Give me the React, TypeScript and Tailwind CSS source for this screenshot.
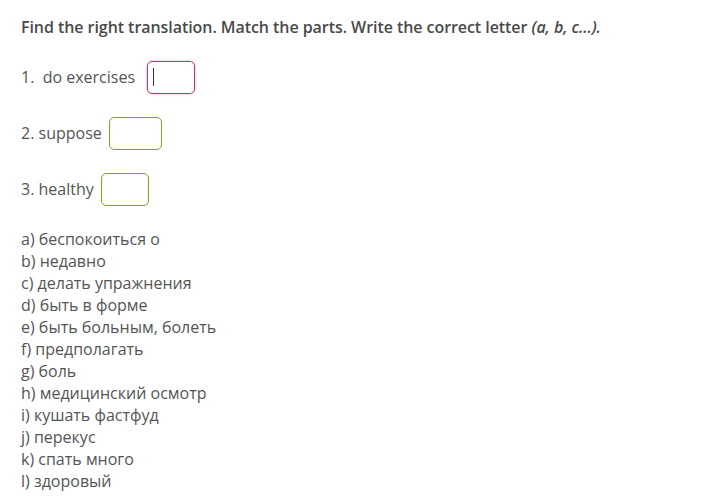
import React from "react";

const items = [
  "a) беспокоиться о",
  "b) недавно",
  "c) делать упражнения",
  "d) быть в форме",
  "e) быть больным, болеть",
  "f) предполагать",
  "g) боль",
  "h) медицинский осмотр",
  "i) кушать фастфуд",
  "j) перекус",
  "k) спать много",
  "l) здоровый",
];

export default function App() {
  return (
    <div
      className="w-[719px] h-[504px] bg-white text-[#555555] pl-[21px] pt-[15px]"
      style={{ fontFamily: '"Open Sans", sans-serif' }}
    >
      <div className="text-[16px] leading-[24px] font-semibold text-[#4a4a4a] tracking-[-0.06px]">
        Find the right translation. Match the parts. Write the correct letter{" "}
        <em className="italic">(a, b, c...).</em>
      </div>
      <div className="mt-[21px] flex items-center h-[34px] text-[16px]">
        <span>1.&nbsp;&nbsp;do exercises</span>
        <div className="ml-[12px] w-[48px] h-[33px] border border-[#c2306f] rounded-[5px] shadow-[0_0_3px_rgba(194,48,111,0.35)] flex items-center pl-[5px]">
          <div className="w-[1px] h-[18px] bg-[#333]" />
        </div>
      </div>
      <div className="mt-[22px] flex items-center h-[34px] text-[16px]">
        <span>2. suppose</span>
        <div className="ml-[7px] w-[53px] h-[33px] border border-[#8aa139] rounded-[5px] shadow-[inset_0_0_2px_rgba(138,161,57,0.3)]" />
      </div>
      <div className="mt-[22px] flex items-center h-[34px] text-[16px]">
        <span>3. healthy</span>
        <div className="ml-[7px] w-[48px] h-[33px] border border-[#8aa139] rounded-[5px] shadow-[inset_0_0_2px_rgba(138,161,57,0.3)]" />
      </div>
      <div className="mt-[22px] text-[16px] leading-[22px]">
        {items.map((t) => (
          <div key={t}>{t}</div>
        ))}
      </div>
    </div>
  );
}
